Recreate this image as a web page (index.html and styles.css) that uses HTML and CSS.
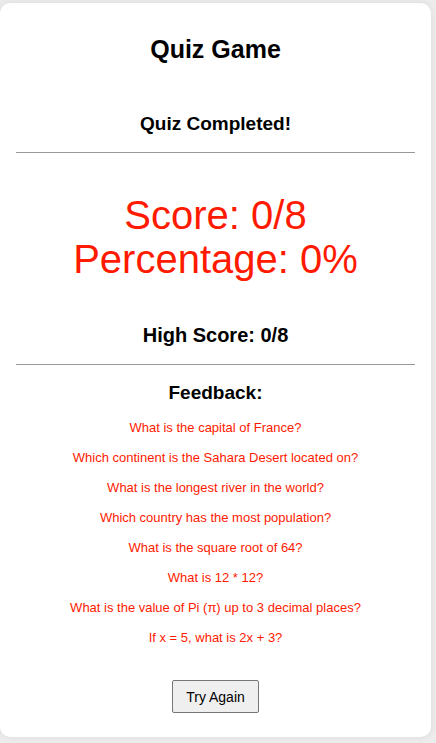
FILE: index.html
```html
<!DOCTYPE html>
<html>
<head>
<meta charset="utf-8">
<link rel="stylesheet" href="styles.css">
</head>
<body>
<div class="card">
  <h1 class="title">Quiz Game</h1>
  <h3 class="done">Quiz Completed!</h3>
  <hr class="rule">
  <div class="result">
    <div class="big">Score: 0/8</div>
    <div class="big">Percentage: 0%</div>
  </div>
  <h3 class="high">High Score: 0/8</h3>
  <hr class="rule">
  <h3 class="fb-title">Feedback:</h3>
  <ul class="fb-list">
    <li>What is the capital of France?</li>
    <li>Which continent is the Sahara Desert located on?</li>
    <li>What is the longest river in the world?</li>
    <li>Which country has the most population?</li>
    <li>What is the square root of 64?</li>
    <li>What is 12 * 12?</li>
    <li>What is the value of Pi (π) up to 3 decimal places?</li>
    <li>If x = 5, what is 2x + 3?</li>
  </ul>
  <div class="actions"><button class="btn">Try Again</button></div>
</div>
</body>
</html>
```
FILE: styles.css
```css
html, body { margin: 0; padding: 0; }
body {
  background: #ececec;
  font-family: "Liberation Sans", Arial, sans-serif;
  padding: 3px 5px 6px 0;
}
.card {
  background: #fff;
  border-radius: 10px;
  box-shadow: 0 0 6px rgba(0,0,0,0.08);
  padding: 16px 16px 24px 16px;
  text-align: center;
  height: 734px;
  box-sizing: border-box;
}
.title {
  font-size: 25px;
  font-weight: bold;
  margin: 15px 0 0;
  line-height: 30px;
}
.done {
  font-size: 19px;
  margin: 49px 0 0;
  line-height: 22px;
}
.rule {
  border: 0;
  border-top: 1px solid #999;
  margin: 17px 0 0;
  height: 0;
}
.result { margin-top: 40px; }
.big {
  color: #ff1a00;
  font-size: 40px;
  line-height: 44px;
}
.high {
  font-size: 20px;
  margin: 42px 0 0;
  line-height: 24px;
}
.fb-title {
  font-size: 19px;
  margin: 17px 0 0;
  line-height: 22px;
}
.fb-list {
  list-style: none;
  margin: 16px 0 0;
  padding: 0;
}
.fb-list li {
  color: #ff1a00;
  font-size: 13px;
  line-height: 15px;
  margin-bottom: 15px;
}
.actions { margin-top: 35px; }
.btn {
  font-family: "Liberation Sans", Arial, sans-serif;
  font-size: 14px;
  background: #efefef;
  border: 1px solid #767676;
  border-radius: 2px;
  width: 87px;
  height: 33px;
  color: #000;
}
```
